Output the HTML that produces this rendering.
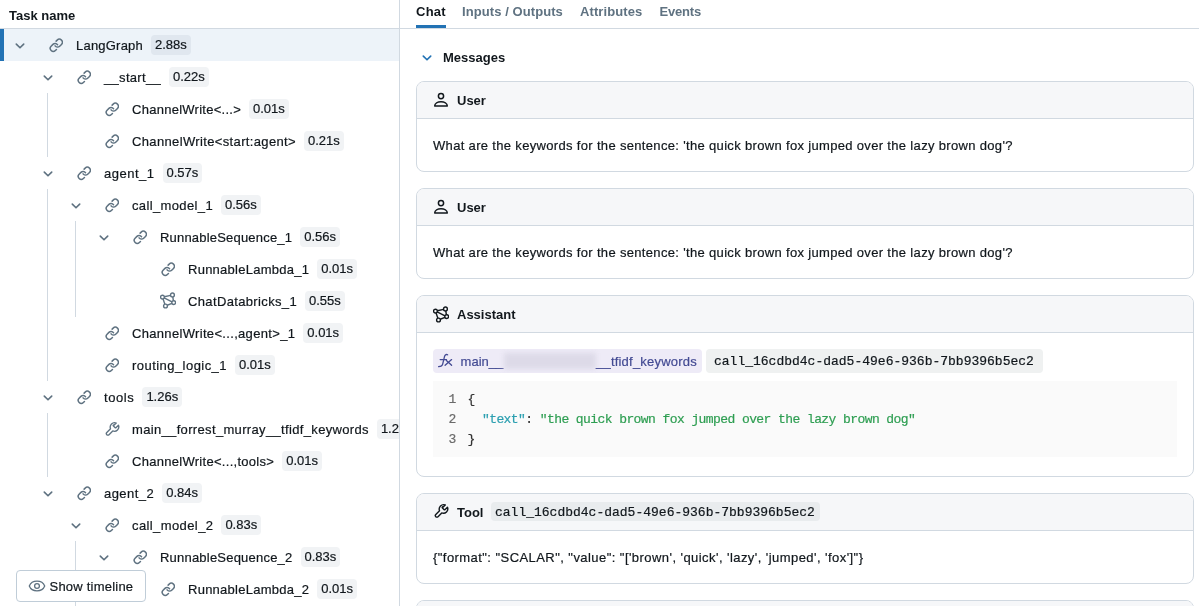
<!DOCTYPE html><html><head><meta charset="utf-8"><style>
*{box-sizing:border-box;margin:0;padding:0}
html,body{width:1199px;height:606px;overflow:hidden;background:#fff;font-family:"Liberation Sans",sans-serif;font-size:13px;color:#11171C}
.abs{position:absolute}
svg{display:block}
.t{position:absolute;white-space:pre;line-height:16px;-webkit-text-stroke:0.2px currentColor}
.b{font-weight:bold;-webkit-text-stroke:0}
.mono{font-family:"Liberation Mono",monospace}
.badge{-webkit-text-stroke:0.2px currentColor;position:absolute;height:20px;line-height:20px;padding:0 4px;border-radius:4px;background:rgba(22,50,80,0.06);white-space:pre}
.card{position:absolute;left:416px;width:778px;border:1px solid #D1D9E1;border-radius:8px;overflow:hidden;background:#fff}
.ch{position:absolute;left:0;top:0;width:100%;height:37px;background:#F6F7F9;border-bottom:1px solid #D1D9E1}
</style></head><body><div style="position:absolute;left:0;top:0;width:1199px;height:606px;will-change:transform;background:#fff;overflow:hidden">

<div class="abs" style="left:0;top:0;width:399px;height:606px;overflow:hidden">
<div class="t b" style="left:9px;top:7.5px">Task name</div>
<div class="abs" style="left:0;top:28px;width:399px;height:1px;background:#D1D9E1"></div>
<div class="abs" style="left:0;top:29px;width:399px;height:32px;background:#EDF3F9"></div>
<div class="abs" style="left:0;top:29px;width:4px;height:32px;background:#2272B4"></div>
<div class="abs" style="left:47px;top:93px;width:1px;height:64px;background:#D1D9E1"></div>
<div class="abs" style="left:47px;top:189px;width:1px;height:192px;background:#D1D9E1"></div>
<div class="abs" style="left:75px;top:221px;width:1px;height:96px;background:#D1D9E1"></div>
<div class="abs" style="left:47px;top:413px;width:1px;height:64px;background:#D1D9E1"></div>
<div class="abs" style="left:75px;top:541px;width:1px;height:65px;background:#D1D9E1"></div>
<div class="abs" style="left:15px;top:42.8px"><svg width="10" height="7" viewBox="0 0 10 7" fill="none" stroke="#5F7281" stroke-width="1.6" stroke-linecap="round" stroke-linejoin="round"><path d="M1.3 1.1 L5 4.8 L8.7 1.1"/></svg></div>
<div class="abs" style="left:48.8px;top:38.2px"><svg width="14.6" height="14.6" viewBox="0 0 24 24" fill="none" stroke="#5F7281" stroke-width="2.45" stroke-linecap="round" stroke-linejoin="round"><path d="M10 13a5 5 0 0 0 7.54.54l3-3a5 5 0 0 0-7.07-7.07l-1.72 1.71"/><path d="M14 11a5 5 0 0 0-7.54-.54l-3 3a5 5 0 0 0 7.07 7.07l1.71-1.71"/></svg></div>
<div class="t" style="left:76px;top:37.5px;letter-spacing:0.211px">LangGraph</div>
<div class="badge" style="left:151px;top:35px">2.88s</div>
<div class="abs" style="left:43px;top:74.8px"><svg width="10" height="7" viewBox="0 0 10 7" fill="none" stroke="#5F7281" stroke-width="1.6" stroke-linecap="round" stroke-linejoin="round"><path d="M1.3 1.1 L5 4.8 L8.7 1.1"/></svg></div>
<div class="abs" style="left:76.8px;top:70.2px"><svg width="14.6" height="14.6" viewBox="0 0 24 24" fill="none" stroke="#5F7281" stroke-width="2.45" stroke-linecap="round" stroke-linejoin="round"><path d="M10 13a5 5 0 0 0 7.54.54l3-3a5 5 0 0 0-7.07-7.07l-1.72 1.71"/><path d="M14 11a5 5 0 0 0-7.54-.54l-3 3a5 5 0 0 0 7.07 7.07l1.71-1.71"/></svg></div>
<div class="t" style="left:104px;top:69.5px;letter-spacing:0.311px">__start__</div>
<div class="badge" style="left:169px;top:67px">0.22s</div>
<div class="abs" style="left:104.8px;top:102.2px"><svg width="14.6" height="14.6" viewBox="0 0 24 24" fill="none" stroke="#5F7281" stroke-width="2.45" stroke-linecap="round" stroke-linejoin="round"><path d="M10 13a5 5 0 0 0 7.54.54l3-3a5 5 0 0 0-7.07-7.07l-1.72 1.71"/><path d="M14 11a5 5 0 0 0-7.54-.54l-3 3a5 5 0 0 0 7.07 7.07l1.71-1.71"/></svg></div>
<div class="t" style="left:132px;top:101.5px;letter-spacing:0.265px">ChannelWrite&lt;...&gt;</div>
<div class="badge" style="left:249px;top:99px">0.01s</div>
<div class="abs" style="left:104.8px;top:134.2px"><svg width="14.6" height="14.6" viewBox="0 0 24 24" fill="none" stroke="#5F7281" stroke-width="2.45" stroke-linecap="round" stroke-linejoin="round"><path d="M10 13a5 5 0 0 0 7.54.54l3-3a5 5 0 0 0-7.07-7.07l-1.72 1.71"/><path d="M14 11a5 5 0 0 0-7.54-.54l-3 3a5 5 0 0 0 7.07 7.07l1.71-1.71"/></svg></div>
<div class="t" style="left:132px;top:133.5px;letter-spacing:0.356px">ChannelWrite&lt;start:agent&gt;</div>
<div class="badge" style="left:304px;top:131px">0.21s</div>
<div class="abs" style="left:43px;top:170.8px"><svg width="10" height="7" viewBox="0 0 10 7" fill="none" stroke="#5F7281" stroke-width="1.6" stroke-linecap="round" stroke-linejoin="round"><path d="M1.3 1.1 L5 4.8 L8.7 1.1"/></svg></div>
<div class="abs" style="left:76.8px;top:166.2px"><svg width="14.6" height="14.6" viewBox="0 0 24 24" fill="none" stroke="#5F7281" stroke-width="2.45" stroke-linecap="round" stroke-linejoin="round"><path d="M10 13a5 5 0 0 0 7.54.54l3-3a5 5 0 0 0-7.07-7.07l-1.72 1.71"/><path d="M14 11a5 5 0 0 0-7.54-.54l-3 3a5 5 0 0 0 7.07 7.07l1.71-1.71"/></svg></div>
<div class="t" style="left:104px;top:165.5px;letter-spacing:0.500px">agent_1</div>
<div class="badge" style="left:162.5px;top:163px">0.57s</div>
<div class="abs" style="left:71px;top:202.8px"><svg width="10" height="7" viewBox="0 0 10 7" fill="none" stroke="#5F7281" stroke-width="1.6" stroke-linecap="round" stroke-linejoin="round"><path d="M1.3 1.1 L5 4.8 L8.7 1.1"/></svg></div>
<div class="abs" style="left:104.8px;top:198.2px"><svg width="14.6" height="14.6" viewBox="0 0 24 24" fill="none" stroke="#5F7281" stroke-width="2.45" stroke-linecap="round" stroke-linejoin="round"><path d="M10 13a5 5 0 0 0 7.54.54l3-3a5 5 0 0 0-7.07-7.07l-1.72 1.71"/><path d="M14 11a5 5 0 0 0-7.54-.54l-3 3a5 5 0 0 0 7.07 7.07l1.71-1.71"/></svg></div>
<div class="t" style="left:132px;top:197.5px;letter-spacing:0.367px">call_model_1</div>
<div class="badge" style="left:221px;top:195px">0.56s</div>
<div class="abs" style="left:99px;top:234.8px"><svg width="10" height="7" viewBox="0 0 10 7" fill="none" stroke="#5F7281" stroke-width="1.6" stroke-linecap="round" stroke-linejoin="round"><path d="M1.3 1.1 L5 4.8 L8.7 1.1"/></svg></div>
<div class="abs" style="left:132.8px;top:230.2px"><svg width="14.6" height="14.6" viewBox="0 0 24 24" fill="none" stroke="#5F7281" stroke-width="2.45" stroke-linecap="round" stroke-linejoin="round"><path d="M10 13a5 5 0 0 0 7.54.54l3-3a5 5 0 0 0-7.07-7.07l-1.72 1.71"/><path d="M14 11a5 5 0 0 0-7.54-.54l-3 3a5 5 0 0 0 7.07 7.07l1.71-1.71"/></svg></div>
<div class="t" style="left:160px;top:229.5px;letter-spacing:0.194px">RunnableSequence_1</div>
<div class="badge" style="left:300.2px;top:227px">0.56s</div>
<div class="abs" style="left:160.8px;top:262.2px"><svg width="14.6" height="14.6" viewBox="0 0 24 24" fill="none" stroke="#5F7281" stroke-width="2.45" stroke-linecap="round" stroke-linejoin="round"><path d="M10 13a5 5 0 0 0 7.54.54l3-3a5 5 0 0 0-7.07-7.07l-1.72 1.71"/><path d="M14 11a5 5 0 0 0-7.54-.54l-3 3a5 5 0 0 0 7.07 7.07l1.71-1.71"/></svg></div>
<div class="t" style="left:188px;top:261.5px;letter-spacing:0.256px">RunnableLambda_1</div>
<div class="badge" style="left:317.2px;top:259px">0.01s</div>
<div class="abs" style="left:160px;top:292px"><svg width="16" height="17" viewBox="0 0 16 17" fill="none" stroke="#5F7281" stroke-width="1.4"><line x1="4.31" y1="4.70" x2="10.59" y2="3.35"/><line x1="4.16" y1="5.93" x2="11.99" y2="9.77"/><line x1="3.07" y1="6.90" x2="4.88" y2="12.20"/><line x1="12.76" y1="4.83" x2="13.39" y2="8.72"/><line x1="11.94" y1="11.33" x2="7.26" y2="13.27"/><circle cx="2.45" cy="5.1" r="1.9"/><circle cx="12.45" cy="2.95" r="1.9"/><circle cx="13.7" cy="10.6" r="1.9"/><circle cx="5.5" cy="14.0" r="1.9"/></svg></div>
<div class="t" style="left:188px;top:293.5px;letter-spacing:0.356px">ChatDatabricks_1</div>
<div class="badge" style="left:305px;top:291px">0.55s</div>
<div class="abs" style="left:104.8px;top:326.2px"><svg width="14.6" height="14.6" viewBox="0 0 24 24" fill="none" stroke="#5F7281" stroke-width="2.45" stroke-linecap="round" stroke-linejoin="round"><path d="M10 13a5 5 0 0 0 7.54.54l3-3a5 5 0 0 0-7.07-7.07l-1.72 1.71"/><path d="M14 11a5 5 0 0 0-7.54-.54l-3 3a5 5 0 0 0 7.07 7.07l1.71-1.71"/></svg></div>
<div class="t" style="left:132px;top:325.5px;letter-spacing:0.324px">ChannelWrite&lt;...,agent&gt;_1</div>
<div class="badge" style="left:303.3px;top:323px">0.01s</div>
<div class="abs" style="left:104.8px;top:358.2px"><svg width="14.6" height="14.6" viewBox="0 0 24 24" fill="none" stroke="#5F7281" stroke-width="2.45" stroke-linecap="round" stroke-linejoin="round"><path d="M10 13a5 5 0 0 0 7.54.54l3-3a5 5 0 0 0-7.07-7.07l-1.72 1.71"/><path d="M14 11a5 5 0 0 0-7.54-.54l-3 3a5 5 0 0 0 7.07 7.07l1.71-1.71"/></svg></div>
<div class="t" style="left:132px;top:357.5px;letter-spacing:0.453px">routing_logic_1</div>
<div class="badge" style="left:235px;top:355px">0.01s</div>
<div class="abs" style="left:43px;top:394.8px"><svg width="10" height="7" viewBox="0 0 10 7" fill="none" stroke="#5F7281" stroke-width="1.6" stroke-linecap="round" stroke-linejoin="round"><path d="M1.3 1.1 L5 4.8 L8.7 1.1"/></svg></div>
<div class="abs" style="left:76.8px;top:390.2px"><svg width="14.6" height="14.6" viewBox="0 0 24 24" fill="none" stroke="#5F7281" stroke-width="2.45" stroke-linecap="round" stroke-linejoin="round"><path d="M10 13a5 5 0 0 0 7.54.54l3-3a5 5 0 0 0-7.07-7.07l-1.72 1.71"/><path d="M14 11a5 5 0 0 0-7.54-.54l-3 3a5 5 0 0 0 7.07 7.07l1.71-1.71"/></svg></div>
<div class="t" style="left:104px;top:389.5px;letter-spacing:0.580px">tools</div>
<div class="badge" style="left:142.4px;top:387px">1.26s</div>
<div class="abs" style="left:104px;top:421px"><svg width="16" height="16" viewBox="0 0 24 24" fill="none" stroke="#5F7281" stroke-width="2" stroke-linecap="round" stroke-linejoin="round"><path d="M14.2 5.8a1.3 1.3 0 0 0 0 1.8l2.2 2.2a1.3 1.3 0 0 0 1.8 0l3.5-3.5a6.6 6.6 0 0 1-8.6 8.6l-5.6 5.6a2.3 2.3 0 0 1-3.3-3.3l5.6-5.6a6.6 6.6 0 0 1 8.6-8.6l-3.5 3.5z"/></svg></div>
<div class="t" style="left:132px;top:421.5px;letter-spacing:0.339px">main__forrest_murray__tfidf_keywords</div>
<div class="badge" style="left:376.9px;top:419px">1.26s</div>
<div class="abs" style="left:104.8px;top:454.2px"><svg width="14.6" height="14.6" viewBox="0 0 24 24" fill="none" stroke="#5F7281" stroke-width="2.45" stroke-linecap="round" stroke-linejoin="round"><path d="M10 13a5 5 0 0 0 7.54.54l3-3a5 5 0 0 0-7.07-7.07l-1.72 1.71"/><path d="M14 11a5 5 0 0 0-7.54-.54l-3 3a5 5 0 0 0 7.07 7.07l1.71-1.71"/></svg></div>
<div class="t" style="left:132px;top:453.5px;letter-spacing:0.287px">ChannelWrite&lt;...,tools&gt;</div>
<div class="badge" style="left:282.2px;top:451px">0.01s</div>
<div class="abs" style="left:43px;top:490.8px"><svg width="10" height="7" viewBox="0 0 10 7" fill="none" stroke="#5F7281" stroke-width="1.6" stroke-linecap="round" stroke-linejoin="round"><path d="M1.3 1.1 L5 4.8 L8.7 1.1"/></svg></div>
<div class="abs" style="left:76.8px;top:486.2px"><svg width="14.6" height="14.6" viewBox="0 0 24 24" fill="none" stroke="#5F7281" stroke-width="2.45" stroke-linecap="round" stroke-linejoin="round"><path d="M10 13a5 5 0 0 0 7.54.54l3-3a5 5 0 0 0-7.07-7.07l-1.72 1.71"/><path d="M14 11a5 5 0 0 0-7.54-.54l-3 3a5 5 0 0 0 7.07 7.07l1.71-1.71"/></svg></div>
<div class="t" style="left:104px;top:485.5px;letter-spacing:0.457px">agent_2</div>
<div class="badge" style="left:162.2px;top:483px">0.84s</div>
<div class="abs" style="left:71px;top:522.8px"><svg width="10" height="7" viewBox="0 0 10 7" fill="none" stroke="#5F7281" stroke-width="1.6" stroke-linecap="round" stroke-linejoin="round"><path d="M1.3 1.1 L5 4.8 L8.7 1.1"/></svg></div>
<div class="abs" style="left:104.8px;top:518.2px"><svg width="14.6" height="14.6" viewBox="0 0 24 24" fill="none" stroke="#5F7281" stroke-width="2.45" stroke-linecap="round" stroke-linejoin="round"><path d="M10 13a5 5 0 0 0 7.54.54l3-3a5 5 0 0 0-7.07-7.07l-1.72 1.71"/><path d="M14 11a5 5 0 0 0-7.54-.54l-3 3a5 5 0 0 0 7.07 7.07l1.71-1.71"/></svg></div>
<div class="t" style="left:132px;top:517.5px;letter-spacing:0.400px">call_model_2</div>
<div class="badge" style="left:221.4px;top:515px">0.83s</div>
<div class="abs" style="left:99px;top:554.8px"><svg width="10" height="7" viewBox="0 0 10 7" fill="none" stroke="#5F7281" stroke-width="1.6" stroke-linecap="round" stroke-linejoin="round"><path d="M1.3 1.1 L5 4.8 L8.7 1.1"/></svg></div>
<div class="abs" style="left:132.8px;top:550.2px"><svg width="14.6" height="14.6" viewBox="0 0 24 24" fill="none" stroke="#5F7281" stroke-width="2.45" stroke-linecap="round" stroke-linejoin="round"><path d="M10 13a5 5 0 0 0 7.54.54l3-3a5 5 0 0 0-7.07-7.07l-1.72 1.71"/><path d="M14 11a5 5 0 0 0-7.54-.54l-3 3a5 5 0 0 0 7.07 7.07l1.71-1.71"/></svg></div>
<div class="t" style="left:160px;top:549.5px;letter-spacing:0.211px">RunnableSequence_2</div>
<div class="badge" style="left:300.5px;top:547px">0.83s</div>
<div class="abs" style="left:160.8px;top:582.2px"><svg width="14.6" height="14.6" viewBox="0 0 24 24" fill="none" stroke="#5F7281" stroke-width="2.45" stroke-linecap="round" stroke-linejoin="round"><path d="M10 13a5 5 0 0 0 7.54.54l3-3a5 5 0 0 0-7.07-7.07l-1.72 1.71"/><path d="M14 11a5 5 0 0 0-7.54-.54l-3 3a5 5 0 0 0 7.07 7.07l1.71-1.71"/></svg></div>
<div class="t" style="left:188px;top:581.5px;letter-spacing:0.256px">RunnableLambda_2</div>
<div class="badge" style="left:317.2px;top:579px">0.01s</div>
<div class="abs" style="left:16px;top:570px;width:130px;height:32px;background:#fff;border:1px solid #C0CDD8;border-radius:4px"></div>
<div class="abs" style="left:28px;top:578px"><svg width="18" height="16" viewBox="0 0 18 16" fill="none" stroke="#5F7281" stroke-width="1.3"><path d="M1.3 8 C3.8 1.6, 14.2 1.6, 16.7 8 C14.2 14.4, 3.8 14.4, 1.3 8 Z"/><circle cx="9" cy="8" r="2.4"/></svg></div>
<div class="t" style="left:49.5px;top:578.5px;letter-spacing:0.22px">Show timeline</div>
</div>
<div class="abs" style="left:399px;top:0;width:1px;height:606px;background:#D1D9E1"></div>
<div class="abs" style="left:400px;top:28px;width:799px;height:1px;background:#D1D9E1"></div>
<div class="t b" style="left:416px;top:3.5px;letter-spacing:0.25px">Chat</div>
<div class="abs" style="left:416px;top:25px;width:30px;height:3px;background:#2272B4"></div>
<div class="t b" style="left:462px;top:3.5px;color:#5F7281;letter-spacing:0.08px">Inputs / Outputs</div>
<div class="t b" style="left:580px;top:3.5px;color:#5F7281;letter-spacing:0.1px">Attributes</div>
<div class="t b" style="left:659.5px;top:3.5px;color:#5F7281;letter-spacing:-0.2px">Events</div>
<div class="abs" style="left:422px;top:55.2px"><svg width="10" height="7" viewBox="0 0 10 7" fill="none" stroke="#2272B4" stroke-width="1.6" stroke-linecap="round" stroke-linejoin="round"><path d="M1.3 1.1 L5 4.8 L8.7 1.1"/></svg></div>
<div class="t b" style="left:443px;top:49.5px">Messages</div>
<div class="card" style="top:81px;height:91px"><div class="ch"></div></div>
<div class="abs" style="left:433px;top:92px"><svg width="16" height="16" viewBox="0 0 16 16" fill="none" stroke="#11171C" stroke-width="1.5" stroke-linejoin="round"><circle cx="8" cy="4.1" r="2.6"/><path d="M1.7 14 C1.7 11.2, 4.8 9.7, 8 9.7 C11.2 9.7, 14.3 11.2, 14.3 14 Z"/></svg></div>
<div class="t b" style="left:457px;top:92.5px">User</div>
<div class="t" style="left:433px;top:137.5px;letter-spacing:0.33px">What are the keywords for the sentence: &#x27;the quick brown fox jumped over the lazy brown dog&#x27;?</div>
<div class="card" style="top:188px;height:91px"><div class="ch"></div></div>
<div class="abs" style="left:433px;top:199px"><svg width="16" height="16" viewBox="0 0 16 16" fill="none" stroke="#11171C" stroke-width="1.5" stroke-linejoin="round"><circle cx="8" cy="4.1" r="2.6"/><path d="M1.7 14 C1.7 11.2, 4.8 9.7, 8 9.7 C11.2 9.7, 14.3 11.2, 14.3 14 Z"/></svg></div>
<div class="t b" style="left:457px;top:199.5px">User</div>
<div class="t" style="left:433px;top:244.5px;letter-spacing:0.33px">What are the keywords for the sentence: &#x27;the quick brown fox jumped over the lazy brown dog&#x27;?</div>
<div class="card" style="top:295px;height:182px"><div class="ch"></div></div>
<div class="abs" style="left:433px;top:305.5px"><svg width="16" height="17" viewBox="0 0 16 17" fill="none" stroke="#11171C" stroke-width="1.4"><line x1="4.31" y1="4.70" x2="10.59" y2="3.35"/><line x1="4.16" y1="5.93" x2="11.99" y2="9.77"/><line x1="3.07" y1="6.90" x2="4.88" y2="12.20"/><line x1="12.76" y1="4.83" x2="13.39" y2="8.72"/><line x1="11.94" y1="11.33" x2="7.26" y2="13.27"/><circle cx="2.45" cy="5.1" r="1.9"/><circle cx="12.45" cy="2.95" r="1.9"/><circle cx="13.7" cy="10.6" r="1.9"/><circle cx="5.5" cy="14.0" r="1.9"/></svg></div>
<div class="t b" style="left:457px;top:306.5px">Assistant</div>
<div class="abs" style="left:433px;top:349px;width:269px;height:24px;border-radius:4px;background:#EEEBF7"></div>
<div class="abs" style="left:437px;top:353px"><svg width="16" height="16" viewBox="0 0 16 16" fill="none" stroke="#434A93" stroke-width="1.3" stroke-linecap="round"><path d="M10.6 1.8 C9.6 1.2, 8.2 1.6, 7.6 3.2 L5.6 11.3 C5.2 12.9, 3.8 13.4, 1.6 13.6"/><path d="M3.2 6.6 H9.5"/><path d="M8.1 12.3 L14.6 6.6"/><path d="M9.4 7.5 L14.6 12.3"/></svg></div>
<div class="t" style="left:460.6px;top:353.5px;color:#434A93">main__</div>
<div class="abs" style="left:433px;top:349px;width:269px;height:24px;overflow:hidden;border-radius:4px"><div class="abs" style="left:71px;top:4px;width:92px;height:16px;background:#DDDAE8;filter:blur(2.5px)"></div></div>
<div class="t" style="left:596px;top:353.5px;color:#434A93;letter-spacing:0.21px">__tfidf_keywords</div>
<div class="abs" style="left:706px;top:349px;width:336.5px;height:24px;border-radius:4px;background:#EFF1F1"></div>
<div class="t mono" style="left:714px;top:353.5px">call_16cdbd4c-dad5-49e6-936b-7bb9396b5ec2</div>
<div class="abs" style="left:433px;top:381px;width:744px;height:76px;background:#FAFAFA"></div>
<div class="t mono" style="left:448.4px;top:391.5px;font-size:13px;letter-spacing:-0.58px;color:#6B6B6B">1</div>
<div class="t mono" style="left:467.5px;top:391.5px;font-size:13px;letter-spacing:-0.58px"><span style="color:#333">{</span></div>
<div class="t mono" style="left:448.4px;top:411.5px;font-size:13px;letter-spacing:-0.58px;color:#6B6B6B">2</div>
<div class="t mono" style="left:467.5px;top:411.5px;font-size:13px;letter-spacing:-0.58px">  <span style="color:#2B9FB0">"text"</span><span style="color:#333">: </span><span style="color:#2E9E52">"the quick brown fox jumped over the lazy brown dog"</span></div>
<div class="t mono" style="left:448.4px;top:431.5px;font-size:13px;letter-spacing:-0.58px;color:#6B6B6B">3</div>
<div class="t mono" style="left:467.5px;top:431.5px;font-size:13px;letter-spacing:-0.58px"><span style="color:#333">}</span></div>
<div class="card" style="top:493px;height:91px"><div class="ch"></div></div>
<div class="abs" style="left:433px;top:503px"><svg width="16" height="16" viewBox="0 0 24 24" fill="none" stroke="#11171C" stroke-width="2.1" stroke-linecap="round" stroke-linejoin="round"><path d="M14.2 5.8a1.3 1.3 0 0 0 0 1.8l2.2 2.2a1.3 1.3 0 0 0 1.8 0l3.5-3.5a6.6 6.6 0 0 1-8.6 8.6l-5.6 5.6a2.3 2.3 0 0 1-3.3-3.3l5.6-5.6a6.6 6.6 0 0 1 8.6-8.6l-3.5 3.5z"/></svg></div>
<div class="t b" style="left:457px;top:504.5px">Tool</div>
<div class="abs" style="left:491px;top:502px;width:328.5px;height:19px;border-radius:4px;background:#E9ECEE"></div>
<div class="t mono" style="left:495px;top:504.5px">call_16cdbd4c-dad5-49e6-936b-7bb9396b5ec2</div>
<div class="t" style="left:433px;top:549.5px;letter-spacing:0.44px">{&quot;format&quot;: &quot;SCALAR&quot;, &quot;value&quot;: &quot;[&#x27;brown&#x27;, &#x27;quick&#x27;, &#x27;lazy&#x27;, &#x27;jumped&#x27;, &#x27;fox&#x27;]&quot;}</div>
<div class="card" style="top:600px;height:91px"><div class="ch"></div></div>
</div></body></html>
